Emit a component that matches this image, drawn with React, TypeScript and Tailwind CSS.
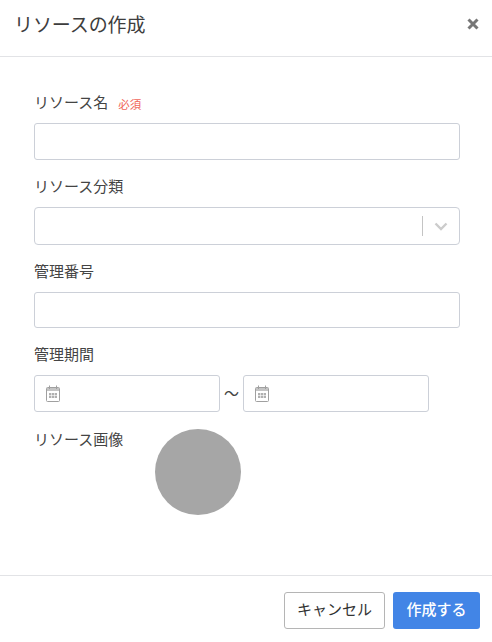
const font = { fontFamily: '"Noto Sans CJK JP", sans-serif' };

function Calendar() {
  return (
    <svg width="14" height="17" viewBox="0 0 14 17" className="shrink-0" fill="none">
      <rect x="0.5" y="2.5" width="13" height="14" rx="1" stroke="#a0a0a0" />
      <rect x="1" y="3" width="12" height="3" fill="#c4c4c4" />
      <line x1="3.5" y1="0.5" x2="3.5" y2="4" stroke="#a0a0a0" />
      <line x1="10.5" y1="0.5" x2="10.5" y2="4" stroke="#a0a0a0" />
      <rect x="3" y="8" width="8" height="5" fill="#b0b0b0" />
      <path d="M5.5 8v5M8.5 8v5M3 10.5h8" stroke="#fff" strokeWidth="0.6" />
    </svg>
  );
}

function DateBox() {
  return (
    <div className="flex h-[37px] w-[186px] items-center rounded-[3px] border border-[#ccd0d8] bg-white pl-[11px]">
      <Calendar />
    </div>
  );
}

function Label({ children }: { children: React.ReactNode }) {
  return <div className="text-[15px] leading-[22px] text-[#444]">{children}</div>;
}

export default function App() {
  return (
    <div className="flex h-[642px] w-[492px] flex-col bg-white" style={font}>
      <header className="flex h-[57px] shrink-0 items-start justify-between border-b border-[#e2e3e6] pl-[14px] pr-[12px] pt-[10px]">
        <h1 className="text-[19px] leading-[28px] font-normal text-[#3d3d3d] tracking-[-0.1px]">リソースの作成</h1>
        <svg width="14" height="14" viewBox="0 0 14 14" className="mt-[7px]">
          <path d="M2.5 2.5L11.5 11.5M11.5 2.5L2.5 11.5" stroke="#777" strokeWidth="3" />
        </svg>
      </header>

      <main className="flex-1 px-[34px] pt-[34px]">
        <div className="flex items-center gap-[10px]">
          <Label>リソース名</Label>
          <span className="mt-[4px] text-[11.5px] leading-[16px] text-[#f0665a]">必須</span>
        </div>
        <input className="mt-[10px] block h-[37px] w-[426px] rounded-[3px] border border-[#ccd0d8] bg-white" />

        <div className="mt-[15px]"><Label>リソース分類</Label></div>
        <div className="mt-[10px] flex h-[38px] w-[426px] items-center justify-end rounded-[4px] border border-[#ccd0d8] bg-white">
          <div className="h-[20px] w-px bg-[#c4c4c4]" />
          <svg width="14" height="9" viewBox="0 0 14 9" className="mx-[11px]" fill="none">
            <path d="M1.5 1.5L7 7L12.5 1.5" stroke="#cccccc" strokeWidth="2.4" />
          </svg>
        </div>

        <div className="mt-[15px]"><Label>管理番号</Label></div>
        <input className="mt-[10px] block h-[36px] w-[426px] rounded-[3px] border border-[#ccd0d8] bg-white" />

        <div className="mt-[15px]"><Label>管理期間</Label></div>
        <div className="mt-[10px] flex items-center">
          <DateBox />
          <span className="w-[23px] pb-[2px] text-center text-[15px] leading-[22px] text-[#444]">〜</span>
          <DateBox />
        </div>

        <div className="mt-[17px] flex items-start">
          <div className="mt-[-1px] w-[121px]"><Label>リソース画像</Label></div>
          <div className="h-[86px] w-[86px] rounded-full bg-[#a6a6a6]" />
        </div>
      </main>

      <footer className="flex h-[67px] shrink-0 items-start justify-end gap-[8px] border-t border-[#e2e3e6] pr-[12px] pt-[16px]">
        <button className="h-[37px] w-[101px] rounded-[3px] border border-[#b5b5b5] bg-white pb-[2px] text-[15px] text-[#333]">キャンセル</button>
        <button className="h-[37px] w-[87px] rounded-[3px] bg-[#4285e6] pb-[2px] text-[15px] font-medium text-white">作成する</button>
      </footer>
    </div>
  );
}
